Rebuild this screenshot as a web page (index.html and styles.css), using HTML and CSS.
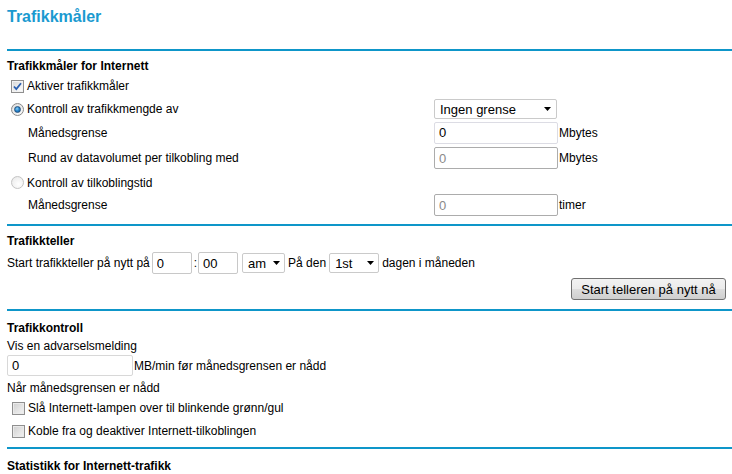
FILE: index.html
```html
<!DOCTYPE html>
<html lang="no">
<head>
<meta charset="utf-8">
<title>Trafikkmåler</title>
<link rel="stylesheet" href="styles.css">
</head>
<body>
<div class="page">
  <h1 class="title">Trafikkmåler</h1>
  <div class="rule rule-1"></div>

  <h2 class="sec">Trafikkmåler for Internett</h2>
  <div class="frow h24">
    <div class="lab"><span class="cb checked"><svg viewBox="0 0 11 11" width="11" height="11"><path d="M2 5.5 L4.3 8 L9 2.2" fill="none" stroke="#2a5fb0" stroke-width="1.8"/></svg></span><span>Aktiver trafikkmåler</span></div>
    <div></div>
  </div>
  <div class="frow h22">
    <div class="lab"><span class="radio on"><i></i></span><span>Kontroll av trafikkmengde av</span></div>
    <div class="ctl"><div class="select sel-wide"><span>Ingen grense</span><svg class="arr" viewBox="0 0 7 4" width="7" height="4"><path d="M0 0H7L3.5 4Z" fill="#000"/></svg></div></div>
  </div>
  <div class="frow h25">
    <div class="lab ind">Månedsgrense</div>
    <div class="ctl"><input class="txt wide active" type="text" value="0"><span class="unit">Mbytes</span></div>
  </div>
  <div class="frow h26">
    <div class="lab ind">Rund av datavolumet per tilkobling med</div>
    <div class="ctl"><input class="txt wide off" type="text" value="0" disabled><span class="unit">Mbytes</span></div>
  </div>
  <div class="frow h23">
    <div class="lab"><span class="radio dis"></span><span>Kontroll av tilkoblingstid</span></div>
    <div></div>
  </div>
  <div class="frow h22">
    <div class="lab ind">Månedsgrense</div>
    <div class="ctl"><input class="txt wide off" type="text" value="0" disabled><span class="unit">timer</span></div>
  </div>
  <div class="rule rule-2"></div>

  <h2 class="sec">Trafikkteller</h2>
  <div class="trow">
    <span>Start trafikkteller på nytt på</span>
    <input class="txt small t-h" type="text" value="0">
    <span class="colon">:</span>
    <input class="txt small t-m" type="text" value="00">
    <div class="select sel-am"><span>am</span><svg class="arr" viewBox="0 0 7 4" width="7" height="4"><path d="M0 0H7L3.5 4Z" fill="#000"/></svg></div>
    <span class="pad">På den</span>
    <div class="select sel-day"><span>1st</span><svg class="arr" viewBox="0 0 7 4" width="7" height="4"><path d="M0 0H7L3.5 4Z" fill="#000"/></svg></div>
    <span class="pad">dagen i måneden</span>
  </div>
  <div class="brow"><button class="btn" type="button">Start telleren på nytt nå</button></div>
  <div class="rule rule-3"></div>

  <h2 class="sec sec-b">Trafikkontroll</h2>
  <div class="line l-vis">Vis en advarselsmelding</div>
  <div class="irow"><input class="txt warn" type="text" value="0"><span class="unit">MB/min før månedsgrensen er nådd</span></div>
  <div class="line l-nar">Når månedsgrensen er nådd</div>
  <div class="crow c1"><span class="cb gray"></span><span>Slå Internett-lampen over til blinkende grønn/gul</span></div>
  <div class="crow c2"><span class="cb gray"></span><span>Koble fra og deaktiver Internett-tilkoblingen</span></div>
  <div class="rule rule-4"></div>

  <h2 class="sec sec-b">Statistikk for Internett-trafikk</h2>
</div>
</body>
</html>
```

FILE: styles.css
```css
* { box-sizing: border-box; }

html, body {
  margin: 0;
  background: #fff;
}

body {
  font-family: "Liberation Sans", Arial, sans-serif;
  font-size: 12px;
  color: #000;
  overflow: hidden;
}

.page {
  margin-left: 7px;
  width: 725px;
}

.title {
  margin: 7px 0 0;
  font-size: 16px;
  line-height: 20px;
  font-weight: bold;
  color: #1a9ad0;
}

.rule {
  height: 2px;
  background: #0e96c9;
}
.rule-1 { margin-top: 22px; }
.rule-2 { margin-top: 8px; }
.rule-3 { margin-top: 9px; }
.rule-4 { margin-top: 6px; }

.sec {
  margin: 7px 0 0;
  font-size: 12px;
  line-height: 16px;
  font-weight: bold;
}
.sec-b { margin-top: 9px; }

/* section 1 grid rows */
.frow {
  display: grid;
  grid-template-columns: 427px 1fr;
  align-items: center;
}
.h22 { height: 22px; }
.h23 { height: 23px; }
.h24 { height: 24px; }
.h25 { height: 25px; }
.h26 { height: 26px; }

.lab {
  display: flex;
  align-items: center;
  padding-left: 4px;
  line-height: 14px;
}
.lab.ind { padding-left: 21px; }

.ctl {
  display: flex;
  align-items: center;
}

.unit { margin-left: 1px; }

/* checkbox */
.cb {
  width: 13px;
  height: 13px;
  flex: none;
  margin-right: 3px;
  border: 1px solid #8f8f8f;
  background: linear-gradient(135deg, #d6d6d6 0%, #f4f4f4 70%, #fff 100%);
  box-shadow: inset 0 0 0 1px #f2f2f2;
  display: flex;
  align-items: center;
  justify-content: center;
}
.cb.gray {
  background: linear-gradient(135deg, #cfcfcf 0%, #e6e6e6 60%, #f2f2f2 100%);
  box-shadow: inset 0 0 0 1px #eaeaea;
}

/* radio */
.radio {
  width: 13px;
  height: 13px;
  flex: none;
  margin-right: 3px;
  border-radius: 50%;
  border: 1px solid #8a8a8a;
  background: radial-gradient(circle at 60% 65%, #fff 0%, #e9e9e9 60%, #cfcfcf 100%);
  display: flex;
  align-items: center;
  justify-content: center;
}
.radio.on i {
  width: 7px;
  height: 7px;
  border-radius: 50%;
  background: radial-gradient(circle at 40% 35%, #8fd0f5 0%, #2a8ad0 45%, #0d4f94 100%);
  border: 1px solid #24507c;
}
.radio.dis {
  border-color: #c4c4c4;
  background: radial-gradient(circle at 60% 65%, #fff 0%, #f1f1f1 60%, #e2e2e2 100%);
}

/* text inputs */
.txt {
  height: 22px;
  margin: 0;
  padding: 0 0 0 4px;
  border: 1px solid #c8c8c8;
  border-radius: 2px;
  font-family: "Liberation Sans", Arial, sans-serif;
  font-size: 13px;
  color: #000;
  background: #fff;
  outline: none;
}
.txt.wide { width: 124px; }
.txt.active { border-color: #dcdce4; }
.txt.off {
  color: #8a8a8a;
  border-color: #acacac;
}

/* selects */
.select {
  display: flex;
  align-items: center;
  justify-content: space-between;
  height: 20px;
  padding: 0 5px 0 5px;
  border: 1px solid #cacaca;
  border-radius: 2px;
  background: #fff;
  font-size: 13px;
}
.select .arr { flex: none; }
.sel-wide { width: 123px; padding-right: 5px; }
.sel-am { width: 43px; margin-left: 4px; padding-right: 4px; }
.sel-day { width: 50px; margin-left: 3px; padding-right: 4px; }

/* Trafikkteller row */
.trow {
  display: flex;
  align-items: center;
  height: 22px;
  margin-top: 3px;
}
.txt.small { width: 40px; }
.t-h { margin-left: 2px; }
.colon { margin: 0 1px 0 2px; }
.pad { margin-left: 3px; }

.brow {
  display: flex;
  justify-content: flex-end;
  margin-top: 4px;
  padding-right: 6px;
}
.btn {
  width: 155px;
  height: 22px;
  margin: 0;
  padding: 0;
  border: 1px solid #707070;
  border-radius: 3px;
  background: linear-gradient(#f2f2f2 0%, #ebebeb 50%, #dddddd 51%, #cfcfcf 100%);
  font-family: "Liberation Sans", Arial, sans-serif;
  font-size: 13px;
  color: #000;
}

/* Trafikkontroll */
.line { line-height: 16px; }
.l-vis { margin-top: 2px; }
.l-nar { margin-top: 4px; }

.irow {
  display: flex;
  align-items: center;
  margin-top: 1px;
}
.txt.warn {
  width: 126px;
  height: 21px;
  border-color: #d8d8d8;
}

.crow {
  display: flex;
  align-items: center;
  height: 20px;
  padding-left: 5px;
}
.crow .cb { margin-right: 3px; }
.c1 { margin-top: 2px; }
.c2 { margin-top: 3px; }
```
